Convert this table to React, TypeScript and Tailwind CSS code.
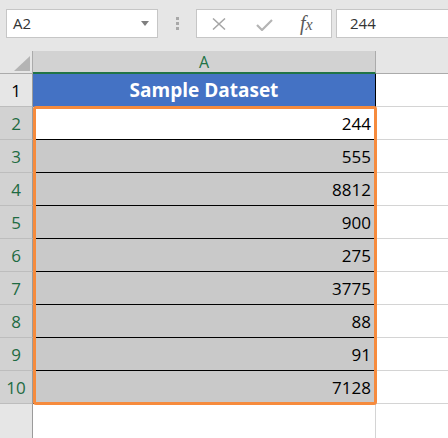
import { useState } from "react";

const values = [244, 555, 8812, 900, 275, 3775, 88, 91, 7128]

function NameBox({ cell }: { cell: string }) {
    return (
        <div className="ml-[6px] w-[152px] h-[29px] bg-white border border-[#c6c6c6] flex items-center justify-between pl-[6px] pr-[8px] text-[15px] text-[#333]">
            <span>{cell}</span>
            <svg width="8" height="5" viewBox="0 0 8 5"><path d="M0 0 L8 0 L4 5 Z" fill="#7f7f7f" /></svg>
        </div>
    )
}

function FormulaBar({ value }: { value: string }) {
    return (
        <div className="h-[51px] bg-[#e6e6e6] flex items-start pt-[9px]">
            <NameBox cell="A2" />
            {/* grip dots */}
            <div className="w-[38px] h-[29px] flex flex-col items-center justify-center gap-[2px]">
                <div className="w-[3px] h-[3px] bg-[#a8a8a8]" />
                <div className="w-[3px] h-[3px] bg-[#a8a8a8]" />
                <div className="w-[3px] h-[3px] bg-[#a8a8a8]" />
            </div>
            {/* cancel / enter / fx */}
            <div className="w-[136px] h-[29px] bg-white border border-[#c6c6c6] relative">
                <svg className="absolute left-[15px] top-[8px]" width="14" height="12" viewBox="0 0 14 12">
                    <path d="M1 0.5 L13 11.5 M13 0.5 L1 11.5" stroke="#a6a6a6" strokeWidth="1.5" />
                </svg>
                <svg className="absolute left-[59px] top-[9px]" width="17" height="12" viewBox="0 0 17 12">
                    <path d="M1 6 L6 11 L16 1" stroke="#b4b4b4" strokeWidth="2.2" fill="none" />
                </svg>
                <span className="absolute left-[103px] top-[1px] italic text-[20px] text-[#5a5a5a] leading-[24px]" style={{ fontFamily: '"Liberation Serif", serif' }}>
                    f<span className="text-[16px]">x</span>
                </span>
            </div>
            <div className="ml-[4px] flex-1 h-[29px] bg-white border border-[#c6c6c6] border-r-0 flex items-center pl-[13px] text-[15px] text-[#333]">
                {value}
            </div>
        </div>
    )
}

function HeaderRow() {
    return (
        <div className="flex h-[23px]">
            <div className="w-[33px] bg-[#e6e6e6] border-r border-b border-[#ababab] relative">
                <svg className="absolute left-[14px] top-[5px]" width="16" height="15" viewBox="0 0 16 15">
                    <path d="M16 0 L16 15 L0 15 Z" fill="#b4b4b4" />
                </svg>
            </div>
            <div className="w-[343px] bg-[#d2d2d2] border-r border-[#ababab] border-b-2 border-b-[#217346] flex items-center justify-center text-[16px] text-[#217346]">
                A
            </div>
            <div className="flex-1 bg-[#e6e6e6] border-b border-[#ababab]" />
        </div>
    )
}

function Row({ n, children, selected, cellClass }: { n: number, children?: any, selected: boolean, cellClass: string }) {
    return (
        <div className="flex h-[33px]">
            <div className={`w-[33px] border-r border-b border-r-[#9b9b9b] border-b-[#bdbdbd] flex items-center justify-center pt-[2px] text-[17px] ${selected ? 'bg-[#d2d2d2] text-[#1e6b42]' : 'bg-[#e6e6e6] text-black'}`}>
                {n}
            </div>
            <div className={`w-[343px] border-r border-r-black ${cellClass}`}>{children}</div>
            <div className="flex-1 bg-white border-b border-[#d4d4d4]" />
        </div>
    )
}

export default function App() {
    const [active] = useState(0)
    return (
        <div className="w-[448px] h-[438px] bg-white overflow-hidden relative" style={{ fontFamily: '"Open Sans", sans-serif' }}>
            <FormulaBar value={String(values[active])} />
            <HeaderRow />
            <Row n={1} selected={false} cellClass="bg-[#4472c4] border-b border-b-[#4472c4] flex items-center justify-center">
                <span className="text-white font-bold text-[19px] pt-[1px]">Sample Dataset</span>
            </Row>
            {values.map((v, i) => (
                <Row key={i} n={i + 2} selected={true} cellClass={`border-b border-b-black flex items-center justify-end pr-[4px] pt-[2px] text-[17px] text-black ${i === active ? 'bg-white' : 'bg-[#c9c9c9]'}`}>
                    {v}
                </Row>
            ))}
            <div className="flex h-[40px]">
                <div className="w-[33px] bg-[#e6e6e6] border-r border-[#9b9b9b]" />
                <div className="w-[343px] border-r border-[#d4d4d4]" />
                <div className="flex-1" />
            </div>
            {/* orange highlight around the data range */}
            <div className="absolute left-[33px] top-[106px] w-[344px] h-[299px] border-[3px] border-[#f68b3d] rounded-[3px]" />
        </div>
    )
}
